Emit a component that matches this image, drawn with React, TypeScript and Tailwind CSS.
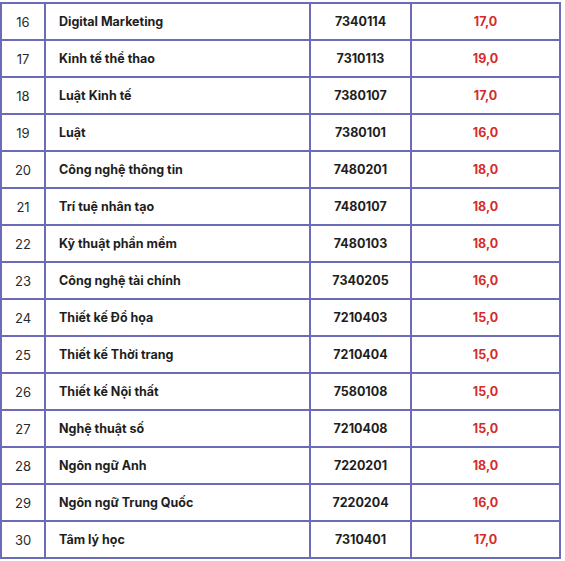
const rows: [string, string, string, string][] = [
  ['16', 'Digital Marketing', '7340114', '17,0'],
  ['17', 'Kinh tế thể thao', '7310113', '19,0'],
  ['18', 'Luật Kinh tế', '7380107', '17,0'],
  ['19', 'Luật', '7380101', '16,0'],
  ['20', 'Công nghệ thông tin', '7480201', '18,0'],
  ['21', 'Trí tuệ nhân tạo', '7480107', '18,0'],
  ['22', 'Kỹ thuật phần mềm', '7480103', '18,0'],
  ['23', 'Công nghệ tài chính', '7340205', '16,0'],
  ['24', 'Thiết kế Đồ họa', '7210403', '15,0'],
  ['25', 'Thiết kế Thời trang', '7210404', '15,0'],
  ['26', 'Thiết kế Nội thất', '7580108', '15,0'],
  ['27', 'Nghệ thuật số', '7210408', '15,0'],
  ['28', 'Ngôn ngữ Anh', '7220201', '18,0'],
  ['29', 'Ngôn ngữ Trung Quốc', '7220204', '16,0'],
  ['30', 'Tâm lý học', '7310401', '17,0'],
]

export default function App() {
  return (
    <div className="w-[565px] h-[561px] bg-white pt-[2px] font-['Inter','Noto_Sans',sans-serif]">
      <div className="w-[561px] bg-[#6c6cb6] p-[2px] grid grid-cols-[42px_263px_99px_147px] auto-rows-[35px] gap-[2px]">
        {rows.map(([n, name, code, score]) => (
          <div key={n} className="contents">
            <div className="bg-white flex items-center justify-center pt-[2px] text-[13px] text-[#2a2a2a]">{n}</div>
            <div className="bg-white flex items-center pl-[13px] pt-[2px] text-[12.5px] font-bold text-[#1e1e1e]">{name}</div>
            <div className="bg-white flex items-center justify-center pt-[2px] text-[12.5px] font-bold text-[#1e1e1e]">{code}</div>
            <div className="bg-white flex items-center justify-center pt-[2px] text-[12.5px] font-bold text-[#d42b2b]">{score}</div>
          </div>
        ))}
      </div>
    </div>
  )
}
